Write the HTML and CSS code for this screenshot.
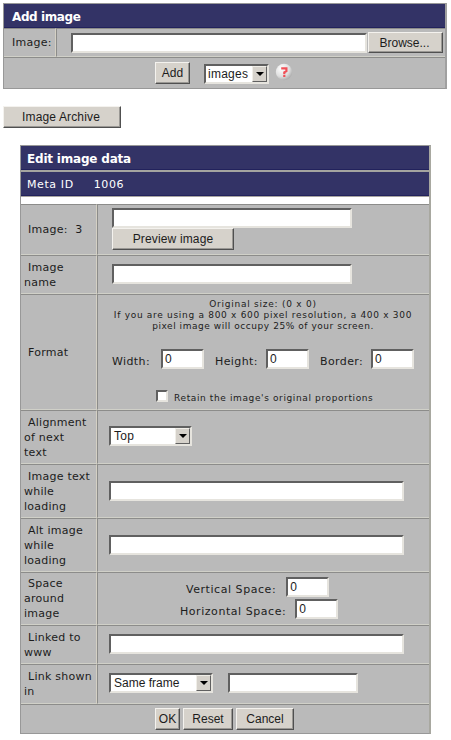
FILE: index.html
```html
<!DOCTYPE html>
<html lang="en">
<head>
<meta charset="utf-8">
<title>Edit image</title>
<link rel="stylesheet" href="styles.css">
</head>
<body>
<form class="panel add">
  <div class="head"><b>Add image</b></div>
  <div class="row r-file">
    <div class="cell label"><span class="t-file">Image:</span></div>
    <div class="cell field"><span class="input"></span><span class="btn browse"><span>Browse...</span></span></div>
  </div>
  <div class="row r-add">
    <div class="cell field">
      <span class="btn addbtn"><span>Add</span></span>
      <span class="select sel-images"><span>images</span><i class="arrow"></i></span>
      <svg class="help" width="18" height="18" viewBox="0 0 18 18">
        <defs><radialGradient id="ball" cx=".35" cy=".3" r=".8"><stop offset="0" stop-color="#fff"/><stop offset=".6" stop-color="#dedede"/><stop offset="1" stop-color="#a0a0a0"/></radialGradient></defs>
        <circle cx="9" cy="9" r="8.2" fill="url(#ball)"/>
        <path d="M6.2 5.4h5.2v2.8L9.3 9.3v1.9M9.3 12v2" fill="none" stroke="#f05058" stroke-width="2.2"/>
      </svg>
    </div>
  </div>
</form>

<span class="btn archive"><span>Image Archive</span></span>

<form class="panel edit">
  <div class="head"><b>Edit image data</b></div>
  <div class="head meta"><span>Meta ID</span><span>1006</span></div>
  <div class="blank"></div>
  <div class="row r-image">
    <div class="cell label"><p>Image:&nbsp; 3</p></div>
    <div class="cell field stack"><span class="input"></span><span class="btn preview"><span>Preview image</span></span></div>
  </div>
  <div class="row r-name">
    <div class="cell label"><p>Image<br>name</p></div>
    <div class="cell field"><span class="input"></span></div>
  </div>
  <div class="row r-format">
    <div class="cell label"><p>Format</p></div>
    <div class="cell field stack">
      <div class="note"><span class="n1">Original size: (0 x 0)</span><span class="n2">If you are using a 800 x 600 pixel resolution, a 400 x 300</span><span class="n3">pixel image will occupy 25% of your screen.</span></div>
      <div class="sizes">
        <span class="w">Width:</span><span class="input num">0</span>
        <span class="h">Height:</span><span class="input num">0</span>
        <span class="b">Border:</span><span class="input num">0</span>
      </div>
      <div class="retain"><span class="check"></span><span>Retain the image's original proportions</span></div>
    </div>
  </div>
  <div class="row r-align">
    <div class="cell label"><p>Alignment<br>of next<br>text</p></div>
    <div class="cell field"><span class="select sel-top"><span>Top</span><i class="arrow"></i></span></div>
  </div>
  <div class="row r-text">
    <div class="cell label"><p>Image text<br>while<br>loading</p></div>
    <div class="cell field"><span class="input wide"></span></div>
  </div>
  <div class="row r-alt">
    <div class="cell label"><p>Alt image<br>while<br>loading</p></div>
    <div class="cell field"><span class="input wide"></span></div>
  </div>
  <div class="row r-space">
    <div class="cell label"><p>Space<br>around<br>image</p></div>
    <div class="cell field stack">
      <div class="sp sp-v"><span>Vertical Space:</span><span class="input num">0</span></div>
      <div class="sp sp-h"><span>Horizontal Space:</span><span class="input num">0</span></div>
    </div>
  </div>
  <div class="row r-link">
    <div class="cell label"><p>Linked to<br>www</p></div>
    <div class="cell field"><span class="input wide"></span></div>
  </div>
  <div class="row r-frame">
    <div class="cell label"><p>Link shown<br>in</p></div>
    <div class="cell field"><span class="select sel-frame"><span>Same frame</span><i class="arrow"></i></span><span class="input target"></span></div>
  </div>
  <div class="row r-buttons">
    <div class="cell field"><span class="btn ok"><span>OK</span></span><span class="btn reset"><span>Reset</span></span><span class="btn cancel"><span>Cancel</span></span></div>
  </div>
</form>
</body>
</html>
```
FILE: styles.css
```css
* { box-sizing: border-box; }
body {
  margin: 0;
  padding: 3px 0 0 3px;
  width: 451px;
  height: 740px;
  overflow: hidden;
  background: #fff;
  color: #1c1c1c;
  font: 11px/15px "DejaVu Sans", Verdana, sans-serif;
  letter-spacing: .25px;
}
p { margin: 0; text-indent: 4px; white-space: nowrap; }
.panel { border: 1px solid #989898; background: #bababa; }
.add { width: 444px; height: 86px; border-right: 2px solid #a0a0a0; }
.head {
  display: flex;
  align-items: center;
  height: 24px;
  padding-left: 8px;
  background: #333366;
  color: #fff;
  border-bottom: 1px solid #22225c;
  white-space: nowrap;
}
.head b { font-size: 12px; letter-spacing: -.4px; padding-top: 3px; }
.edit .head b { letter-spacing: -.2px; }
.row { display: flex; }
.cell {
  display: flex;
  align-items: center;
  border-top: 1px solid #8c8c8a;
  border-bottom: 1px solid #d0d0c8;
}
.label { flex: none; border-right: 1px solid #d4d0c4; }
.field { flex: 1; min-width: 0; }
.label + .field { border-left: 1px solid #8c8c8a; }
.stack { flex-direction: column; align-items: flex-start; }

.input {
  flex: none;
  height: 20px;
  background: #fff;
  border: 2px solid;
  border-color: #606060 #e6e4de #e6e4de #606060;
}
.num {
  width: 43px;
  padding-left: 2px;
  font: 12px/17px "Liberation Sans", Arial, sans-serif;
}
.btn {
  display: flex;
  flex: none;
  align-items: center;
  justify-content: center;
  height: 22px;
  background: #d6d2cb;
  border: 1px solid;
  border-color: #f4f2ee #505050 #505050 #f4f2ee;
  box-shadow: inset -1px -1px 0 #9a9894;
  font: 12px/16px "Liberation Sans", Arial, sans-serif;
  letter-spacing: 0;
  white-space: nowrap;
}
.select {
  display: flex;
  flex: none;
  align-items: center;
  justify-content: space-between;
  height: 20px;
  padding-left: 3px;
  background: #fff;
  border: 2px solid;
  border-color: #606060 #e6e4de #e6e4de #606060;
  font: 12px/16px "Liberation Sans", Arial, sans-serif;
  white-space: nowrap;
}
.arrow {
  display: flex;
  align-items: center;
  justify-content: center;
  width: 15px;
  height: 16px;
  background: #d6d2cb;
  border: 1px solid;
  border-color: #f0eee8 #606060 #606060 #f0eee8;
}
.arrow::after {
  content: "";
  border: solid transparent;
  border-width: 4px 4px 0;
  border-top-color: #000;
}

.r-file { height: 29px; }
.r-file .label { width: 52px; padding-left: 8px; }
.r-file .input { width: 296px; margin-left: 14px; }
.browse { width: 75px; height: 21px; margin-left: 1px; padding-right: 2px; }
.r-add { height: 31px; }
.r-add .cell { border-bottom: 0; }
.addbtn { width: 35px; margin-left: 151px; }
.sel-images { width: 65px; margin-left: 14px; margin-top: 2px; padding-left: 2px; letter-spacing: .25px; }
.help { margin-left: 6px; margin-top: -2px; }
.archive { width: 118px; margin-top: 17px; padding-right: 2px; letter-spacing: .15px; }

.edit { width: 411px; height: 589px; margin: 17px 0 0 17px; border-right: 2px solid #a8a8a0; }
.edit .head { padding-left: 6px; }
.edit .meta { height: 26px; border-top: 2px solid #a4a4a0; letter-spacing: .6px; padding-top: 2px; }
.meta span + span { margin-left: 20px; }
.blank { height: 8px; background: #fff; border-top: 1px solid #a8a4a0; }
.edit .label { width: 76px; padding-left: 3px; }
.r-image { height: 51px; }
.r-image .input, .r-name .input { width: 240px; margin-left: 14px; }
.preview { width: 122px; margin-left: 14px; letter-spacing: .15px; }
.r-image .stack { justify-content: flex-start; padding-top: 3px; }
.r-name { height: 39px; }
.r-name p { padding-top: 1px; }
.r-name .input { margin-top: -1px; }
.r-format { height: 116px; }
.note {
  display: flex;
  flex-direction: column;
  align-items: center;
  width: 330px;
  margin-top: 4px;
  font-size: 9px;
  line-height: 11px;
  white-space: nowrap;
}
.n1 { letter-spacing: .75px; }
.n2 { letter-spacing: .7px; }
.n3 { letter-spacing: .55px; }
.sizes { display: flex; align-items: center; margin: 17px 0 0 14px; }
.sizes span:not(.input) { white-space: nowrap; margin-top: 5px; letter-spacing: .4px; }
.w { width: 49px; }
.h { width: 51px; margin-left: 11px; }
.b { width: 51px; margin-left: 11px; }
.retain { display: flex; margin: 21px 0 0 58px; font-size: 9px; line-height: 16px; letter-spacing: .62px; white-space: nowrap; }
.check {
  width: 12px;
  height: 12px;
  margin-right: 6px;
  background: #fff;
  border: 2px solid;
  border-color: #606060 #e6e4de #e6e4de #606060;
}
.r-align { height: 54px; }
.sel-top { width: 83px; margin-left: 11px; margin-top: -2px; }
.r-text { height: 54px; }
.r-alt { height: 54px; }
.wide { width: 295px; margin-left: 11px; }
.r-space { height: 53px; }
.sp { display: flex; align-items: center; white-space: nowrap; }
.sp .input { margin-left: 10px; }
.sp span:first-child { margin-top: 5px; letter-spacing: .55px; }
.sp-v { margin: 4px 0 0 88px; }
.sp-h { margin: 2px 0 0 82px; }
.sp-h .input { margin-left: 9px; }
.r-link { height: 39px; }
.r-link .input { margin-top: -2px; }
.r-frame { height: 40px; }
.sel-frame { width: 104px; margin-left: 11px; margin-top: -2px; letter-spacing: 0; }
.target { width: 130px; margin-left: 15px; margin-top: -2px; }
.r-buttons { height: 29px; }
.r-buttons .cell { border-bottom: 0; padding-left: 134px; }
.ok { width: 25px; }
.reset { width: 50px; margin-left: 3px; }
.cancel { width: 58px; margin-left: 3px; }
```
